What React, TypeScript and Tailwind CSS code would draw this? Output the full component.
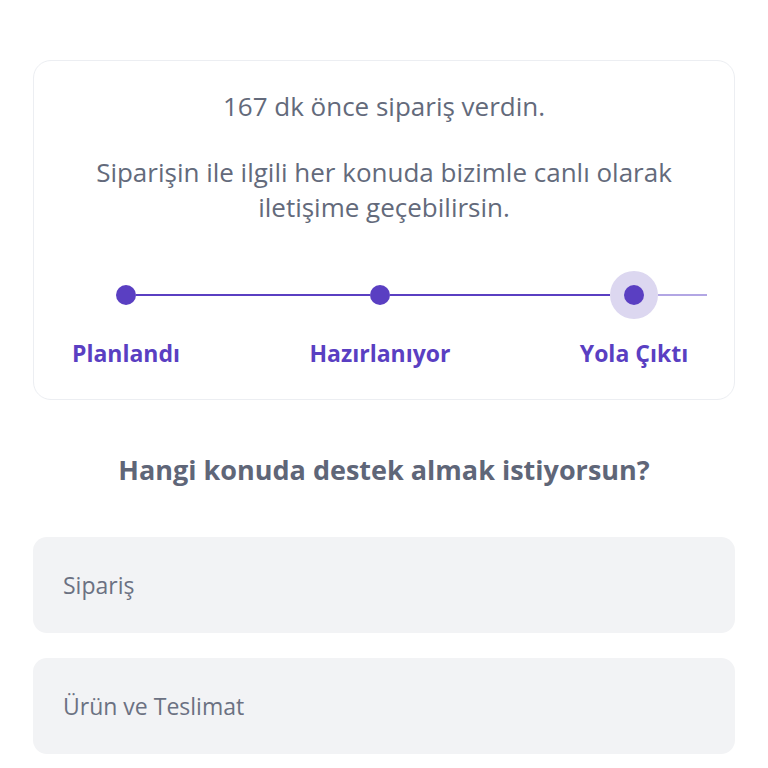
const PURPLE = "bg-[#5a3fc2]";

function Step({ label, first, last }: { label: string; first?: boolean; last?: boolean }) {
  return (
    <div className="w-[254px] shrink-0 flex flex-col items-center">
      <div className="w-full h-[48px] flex items-center">
        <div className={`flex-1 h-[2px] ${first ? "bg-transparent" : PURPLE}`} />
        {last ? (
          <div className="w-[48px] h-[48px] rounded-full bg-[#dcd7f0] flex items-center justify-center">
            <div className={`w-[20px] h-[20px] rounded-full ${PURPLE}`} />
          </div>
        ) : (
          <div className={`w-[20px] h-[20px] rounded-full ${PURPLE}`} />
        )}
        {last ? (
          <div className="flex-1 flex">
            <div className="w-[49px] h-[2px] bg-[#b2a6e4]" />
          </div>
        ) : (
          <div className={`flex-1 h-[2px] ${PURPLE}`} />
        )}
      </div>
      <div className="mt-[19px] text-[23px] leading-[30px] font-bold text-[#5a3fc2] whitespace-nowrap">{label}</div>
    </div>
  );
}

export default function App() {
  const font = { fontFamily: '"Open Sans", "Noto Sans", sans-serif' };
  return (
    <div className="w-[768px] h-[768px] bg-white overflow-hidden" style={font}>
      <div className="pt-[60px] px-[33px]">
        <div className="rounded-[18px] border border-[#eceef2] h-[340px] pt-[30px]">
          <p className="text-center text-[26px] leading-[30px] font-medium text-[#636a7b]">167 dk önce sipariş verdin.</p>
          <p className="mt-[34px] text-center text-[26px] leading-[35px] font-medium text-[#636a7b]">
            Siparişin ile ilgili her konuda bizimle canlı olarak
            <br />
            iletişime geçebilirsin.
          </p>
          <div className="mt-[46px] ml-[-35px] flex">
            <Step label="Planlandı" first />
            <Step label="Hazırlanıyor" />
            <Step label="Yola Çıktı" last />
          </div>
        </div>
        <h2 className="mt-[52px] text-center text-[27px] leading-[36px] font-bold text-[#5f6678]">Hangi konuda destek almak istiyorsun?</h2>
        <div className="mt-[49px] flex flex-col gap-[25px]">
          <div className="h-[96px] rounded-[14px] bg-[#f2f3f5] flex items-center px-[30px] text-[23px] text-[#6b7182]">Sipariş</div>
          <div className="h-[96px] rounded-[14px] bg-[#f2f3f5] flex items-center px-[30px] text-[23px] text-[#6b7182]">Ürün ve Teslimat</div>
        </div>
      </div>
    </div>
  );
}
